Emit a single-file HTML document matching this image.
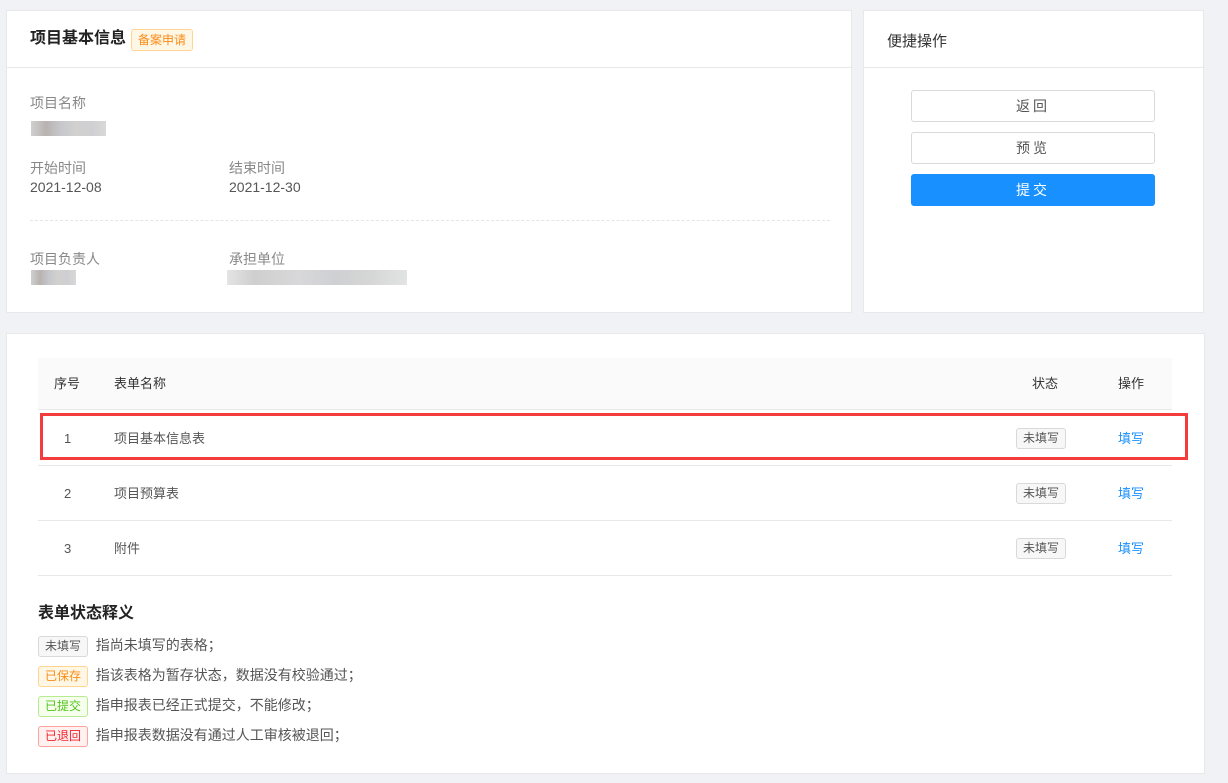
<!DOCTYPE html>
<html><head><meta charset="utf-8"><style>
*{margin:0;padding:0;box-sizing:border-box}
body{width:1228px;height:783px;background:#f0f2f5;font-family:"Liberation Sans","Noto Sans CJK SC",sans-serif;font-size:14px;color:#333;position:relative;overflow:hidden}
.a{position:absolute}
.card{position:absolute;background:#fff;border:1px solid #e8e8e8}
.lbl{color:#888;font-size:14px}
.val{color:#555;font-size:14px}
.blur{position:absolute;height:15px;background:linear-gradient(90deg,#d0d0d0,#b8b2b0 20%,#c6c8cc 40%,#d2d0cf 60%,#cfcfd2 80%,#d8d8d8)}
.btn{position:absolute;left:911px;width:244px;height:32px;border:1px solid #d9d9d9;border-radius:3px;text-align:center;line-height:30px;font-size:14px;color:#555;letter-spacing:3px;background:#fff}
.tag{display:inline-block;height:21px;line-height:19px;padding:0 6px;border:1px solid #d9d9d9;border-radius:3px;background:#f7f7f7;font-size:12px;color:#555}
.row{position:absolute;left:38px;width:1134px;height:55px;border-bottom:1px solid #e8e8e8;line-height:55px}
.link{color:#1890ff}
</style></head><body>
<div class="card" style="left:6px;top:10px;width:846px;height:303px">
  <div class="a" style="left:0;top:0;width:844px;height:57px;border-bottom:1px solid #e8e8e8"></div>
  <div class="a" style="left:23px;top:17px;font-size:16px;font-weight:bold;color:#222;line-height:22px">项目基本信息</div>
  <div class="a" style="left:124px;top:18px;height:22px;padding:0 6px;line-height:20px;border:1px solid #ffd591;background:#fff7e6;color:#fa8c16;font-size:12px;border-radius:3px">备案申请</div>
  <div class="a lbl" style="left:23px;top:82px">项目名称</div>
  <div class="blur" style="left:24px;top:110px;width:75px"></div>
  <div class="a lbl" style="left:23px;top:147px">开始时间</div>
  <div class="a val" style="left:23px;top:168px">2021-12-08</div>
  <div class="a lbl" style="left:222px;top:147px">结束时间</div>
  <div class="a val" style="left:222px;top:168px">2021-12-30</div>
  <div class="a" style="left:23px;top:209px;width:800px;border-top:1px dashed #e5e5e5"></div>
  <div class="a lbl" style="left:23px;top:238px">项目负责人</div>
  <div class="blur" style="left:24px;top:259px;width:45px"></div>
  <div class="a lbl" style="left:222px;top:238px">承担单位</div>
  <div class="blur" style="left:220px;top:259px;width:180px;background:linear-gradient(90deg,#e4e4e4,#cfcfcf 15%,#d8d8da 40%,#cfd0d3 60%,#d6d6d6 80%,#e2e4e4)"></div>
</div>
<div class="card" style="left:863px;top:10px;width:341px;height:303px">
  <div class="a" style="left:0;top:0;width:339px;height:57px;border-bottom:1px solid #e8e8e8"></div>
  <div class="a" style="left:23px;top:19px;font-size:15px;color:#333">便捷操作</div>
</div>
<div class="btn" style="top:90px">返回</div>
<div class="btn" style="top:132px">预览</div>
<div class="btn" style="top:174px;background:#1890ff;border-color:#1890ff;color:#fff">提交</div>

<div class="card" style="left:6px;top:333px;width:1199px;height:441px"></div>
<div class="a" style="left:38px;top:358px;width:1134px;height:52px;background:#fafafa;border-bottom:1px solid #e8e8e8;line-height:52px;font-size:13px;color:#333">
  <span class="a" style="left:16px">序号</span><span class="a" style="left:76px">表单名称</span><span class="a" style="left:994px">状态</span><span class="a" style="left:1080px">操作</span>
</div>
<div class="row" style="top:411px;font-size:13px"><span class="a" style="left:26px;color:#555">1</span><span class="a" style="left:76px;color:#555">项目基本信息表</span><span class="a" style="left:978px;top:17px;line-height:19px" ><span class="tag">未填写</span></span><span class="a link" style="left:1080px">填写</span></div>
<div class="row" style="top:466px;font-size:13px"><span class="a" style="left:26px;color:#555">2</span><span class="a" style="left:76px;color:#555">项目预算表</span><span class="a" style="left:978px;top:17px;line-height:19px"><span class="tag">未填写</span></span><span class="a link" style="left:1080px">填写</span></div>
<div class="row" style="top:521px;font-size:13px"><span class="a" style="left:26px;color:#555">3</span><span class="a" style="left:76px;color:#555">附件</span><span class="a" style="left:978px;top:17px;line-height:19px"><span class="tag">未填写</span></span><span class="a link" style="left:1080px">填写</span></div>
<div class="a" style="left:40px;top:413px;width:1148px;height:47px;border:3px solid #f53c3c"></div>

<div class="a" style="left:38px;top:599px;font-size:16px;font-weight:bold;color:#222">表单状态释义</div>
<div class="a" style="left:38px;top:630px;font-size:14px;color:#555;line-height:30px">
  <div><span class="tag">未填写</span>&nbsp; 指尚未填写的表格；</div>
  <div><span class="tag" style="background:#fff7e6;border-color:#ffd591;color:#fa8c16">已保存</span>&nbsp; 指该表格为暂存状态，数据没有校验通过；</div>
  <div><span class="tag" style="background:#f6ffed;border-color:#b7eb8f;color:#52c41a">已提交</span>&nbsp; 指申报表已经正式提交，不能修改；</div>
  <div><span class="tag" style="background:#fff1f0;border-color:#ffa39e;color:#f5222d">已退回</span>&nbsp; 指申报表数据没有通过人工审核被退回；</div>
</div>
</body></html>
